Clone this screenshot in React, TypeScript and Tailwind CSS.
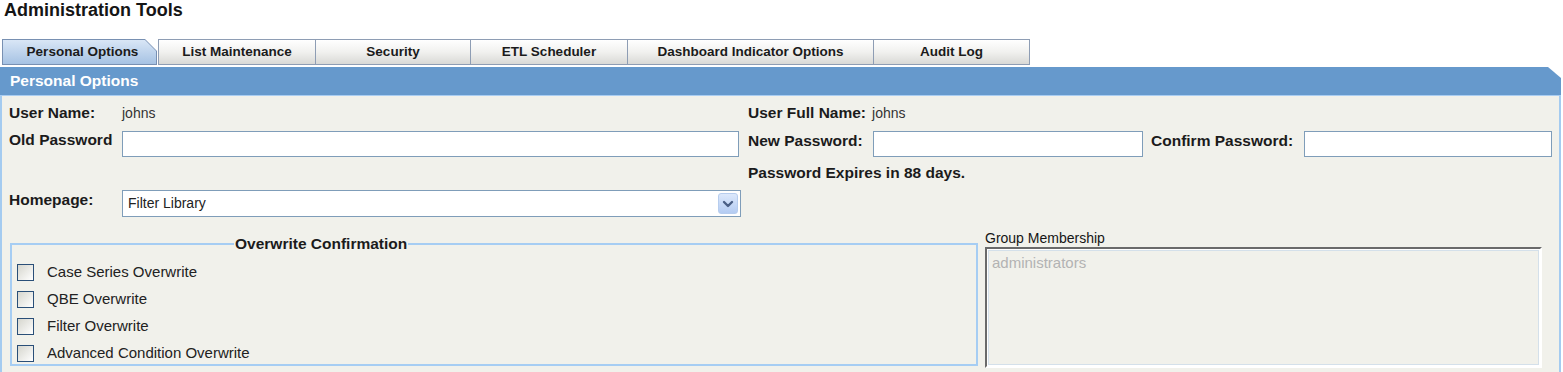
import React from 'react';

const tabs = [
  { label: 'List Maintenance', w: 158 },
  { label: 'Security', w: 155 },
  { label: 'ETL Scheduler', w: 157 },
  { label: 'Dashboard Indicator Options', w: 246 },
  { label: 'Audit Log', w: 156 },
];

const overwrites = [
  'Case Series Overwrite',
  'QBE Overwrite',
  'Filter Overwrite',
  'Advanced Condition Overwrite',
];

const TextBox = ({ w }: { w: string }) => (
  <div className={`${w} h-[26px] bg-white border border-[#7f9db9]`} />
);

export default function App() {
  return (
    <div className="w-[1563px] h-[372px] overflow-hidden bg-white text-[#1b1b1b] font-['Liberation_Sans',Arial,sans-serif]">
      <h1 className="h-[39px] pl-[4px] text-[18px] font-bold leading-[20px] text-[#151515]">
        Administration Tools
      </h1>

      {/* tab strip */}
      <div className="flex h-[26px] pl-[2px] mb-[2px]">
        <div className="w-[155px] h-[26px] p-[1px] bg-[#7890b2] [clip-path:polygon(0_0,calc(100%_-_12px)_0,100%_12px,100%_100%,0_100%)]">
          <div className="h-full flex items-center justify-center pl-[6px] text-[13.5px] font-bold bg-gradient-to-b from-[#d9e6f6] to-[#a6c2e3] [clip-path:polygon(0_0,calc(100%_-_11px)_0,100%_11px,100%_100%,0_100%)]">
            Personal Options
          </div>
        </div>
        {tabs.map((t, i) => (
          <div
            key={t.label}
            style={{ width: t.w }}
            className={`h-[26px] flex items-center justify-center text-[13.5px] font-bold border-y border-r border-[#8e9db4] bg-gradient-to-b from-white via-[#f1f1ef] to-[#d9d9d6] ${i === 0 ? 'border-l ml-[1px]' : ''}`}
          >
            {t.label}
          </div>
        ))}
      </div>

      {/* panel */}
      <div className="w-[1561px]">
        <div className="h-[28px] flex items-center pl-[10px] bg-[#6699cc] text-white text-[15.5px] font-bold [clip-path:polygon(0_0,calc(100%_-_13px)_0,100%_11px,100%_100%,0_100%)]">
          Personal Options
        </div>
        <div className="h-[1px] bg-[#a9cdf2]" />
        <div className="h-[300px] bg-[#f1f1eb] border-x-2 border-[#a4cbf0] pl-[7px] pt-[7px]">
          {/* user names */}
          <div className="flex h-[20px] items-center">
            <div className="w-[113px] text-[15.5px] font-bold">User Name:</div>
            <div className="w-[626px] text-[14px] text-[#333]">johns</div>
            <div className="text-[15.5px] font-bold mr-[6px]">User Full Name:</div>
            <div className="text-[14px] text-[#333]">johns</div>
          </div>

          {/* passwords */}
          <div className="flex mt-[8px] h-[26px]">
            <div className="w-[113px] text-[15.5px] font-bold leading-[18px]">Old Password</div>
            <TextBox w="w-[617px]" />
            <div className="w-[125px] ml-[9px] text-[15.5px] font-bold leading-[18px] pt-[1px]">New Password:</div>
            <TextBox w="w-[270px]" />
            <div className="w-[153px] ml-[8px] text-[15.5px] font-bold leading-[18px] pt-[1px]">Confirm Password:</div>
            <TextBox w="w-[248px]" />
          </div>

          <div className="flex h-[20px] items-center mt-[6px] pl-[739px] text-[15.5px] font-bold">
            Password Expires in 88 days.
          </div>

          {/* homepage */}
          <div className="flex mt-[7px] h-[27px]">
            <div className="w-[113px] text-[15.5px] font-bold leading-[18px] pt-[1px]">Homepage:</div>
            <div className="w-[619px] h-[27px] bg-white border border-[#7f9db9] flex items-center justify-between pl-[5px] pr-[2px]">
              <span className="text-[14px] text-[#222]">Filter Library</span>
              <div className="w-[20px] h-[21px] rounded-[3px] border border-[#b7cdee] bg-gradient-to-b from-[#dce8fc] to-[#b4ccf2] flex items-center justify-center">
                <svg width="12" height="10" viewBox="0 0 12 10">
                  <path d="M2 3 L6 7 L10 3" fill="none" stroke="#4a5f85" strokeWidth="2.4" strokeLinecap="round" strokeLinejoin="round" />
                </svg>
              </div>
            </div>
          </div>

          {/* bottom */}
          <div className="flex mt-[12px]">
            <fieldset className="w-[968px] h-[131px] mt-[6px] ml-[1px] border-2 border-[#a6cdf3] px-[5px] pt-[11px]">
              <legend className="ml-[217px] px-[1px] text-[15.5px] font-bold leading-[18px]">Overwrite Confirmation</legend>
              <div className="flex flex-col gap-[10px]">
                {overwrites.map((o) => (
                  <div key={o} className="flex items-center h-[17px]">
                    <div className="w-[17px] h-[17px] border border-[#2a4f78] bg-gradient-to-br from-[#d6d6ce] to-white" />
                    <span className="ml-[13px] text-[15px] text-[#222]">{o}</span>
                  </div>
                ))}
              </div>
            </fieldset>
            <div className="ml-[7px] flex flex-col">
              <div className="h-[18px] text-[14px] leading-[18px] text-[#151515]">Group Membership</div>
              <div className="w-[557px] h-[121px] border-2 border-t-[#6a6a6a] border-l-[#6a6a6a] border-r-white border-b-white bg-white p-[1px]">
                <div className="h-full border border-[#d4e0ea] bg-[#f1f1eb] pl-[3px] pt-[3px] text-[15px] text-[#b3b3b3] leading-[18px]">
                  administrators
                </div>
              </div>
            </div>
          </div>
        </div>
      </div>
    </div>
  );
}
